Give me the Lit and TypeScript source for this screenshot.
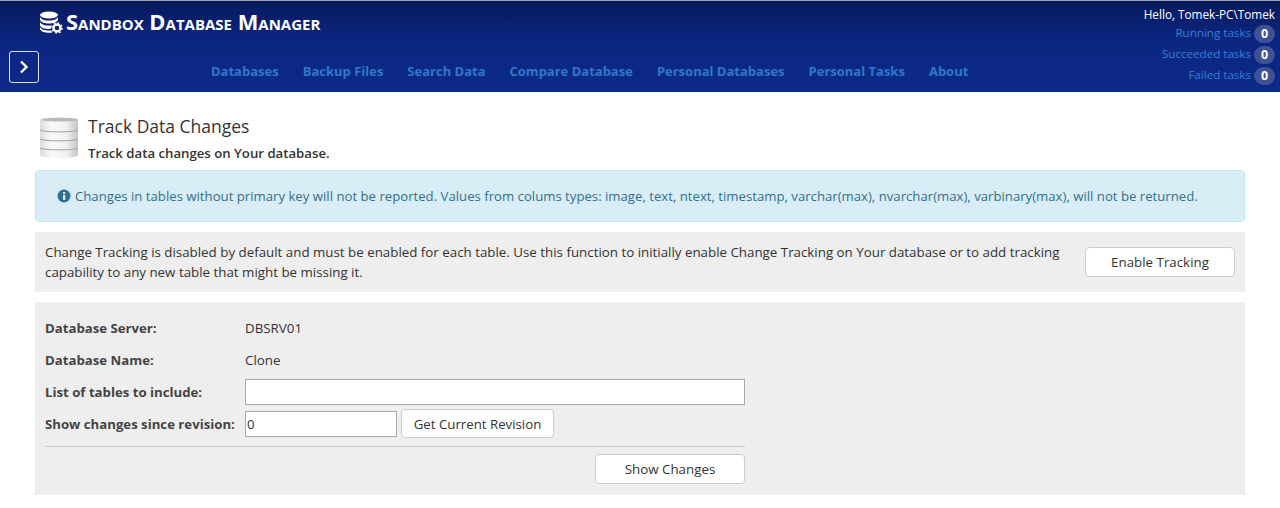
import { LitElement, html, css } from "lit";
import { customElement } from "lit/decorators.js";

const NAV = ["Databases", "Backup Files", "Search Data", "Compare Database", "Personal Databases", "Personal Tasks", "About"];
const TASKS = ["Running tasks", "Succeeded tasks", "Failed tasks"];

@customElement("app-root")
export class AppRoot extends LitElement {
  static styles = css`
    :host { display: block; font-family: "Open Sans", "Noto Sans", sans-serif; font-size: 13.33px; color: #333; background: #fff; height: 508px; overflow: hidden; }
    * { box-sizing: border-box; }
    header { height: 92px; border-top: 1px solid #9a9fb0; background: linear-gradient(#081a5c 0, #0c2682 40px, #0c2a88 100%); display: grid; grid-template-columns: 1fr auto; color: #fff; }
    .left { display: flex; flex-direction: column; }
    .brand { display: flex; align-items: center; height: 42px; padding: 0 0 0 39px; gap: 3px; }
    .brand span { font-weight: 700; font-variant: small-caps; font-size: 21.85px; line-height: 24px; }
    .lower { display: flex; align-items: flex-start; padding: 8px 0 0 9px; }
    .toggle { width: 30px; height: 32px; border: 1px solid #dfe3f0; border-radius: 3px; display: flex; align-items: center; justify-content: center; }
    nav { display: flex; gap: 24px; margin: 10px 0 0 172px; }
    nav a { font-weight: 700; font-size: 13px; line-height: 20px; color: #2f78cc; }
    .user { display: flex; flex-direction: column; align-items: flex-end; padding: 5px 5px 0 0; }
    .hello { font-size: 11.75px; line-height: 16px; color: #fff; }
    .task { display: flex; align-items: center; gap: 3px; height: 21px; font-size: 11.6px; color: #357fd6; }
    .badge { width: 21px; height: 18px; margin-top: 2px; border-radius: 9px; background: #3f5194; color: #fff; font-weight: 700; font-size: 12.5px; display: flex; align-items: center; justify-content: center; }
    main { padding: 0 35px; }
    .title { display: flex; height: 78px; padding: 25px 0 0 5px; gap: 10px; }
    .head { margin-top: -3px; }
    h1 { margin: 1px 0 0; font-size: 17.5px; font-weight: 500; line-height: 22px; }
    .sub { margin-top: 8px; font-size: 13.2px; font-weight: 600; line-height: 17px; }
    .alert { height: 52px; background: #d9edf7; border: 1px solid #bce8f1; border-radius: 4px; color: #31708f; display: flex; align-items: center; gap: 4px; padding-left: 21px; font-size: 13.18px; white-space: nowrap; }
    .panel { background: #eee; margin-top: 10px; }
    .enable { height: 60px; display: flex; align-items: center; justify-content: space-between; padding: 0 10px; }
    .enable p { margin: 0; width: 1025px; line-height: 20px; }
    button { font: inherit; color: #333; background: #fff; border: 1px solid #ccc; border-radius: 4px; padding: 0; }
    .enable button { width: 150px; height: 30px; }
    .form { height: 193px; padding: 10px; }
    .form-inner { width: 700px; display: flex; flex-direction: column; }
    .row { display: flex; align-items: center; height: 32px; }
    label { width: 200px; font-weight: 700; font-size: 13.2px; color: #444; white-space: nowrap; }
    input { font: inherit; height: 26px; border: 1px solid #a9a9a9; background: #fff; padding: 0 1px; color: #333; }
    .wide { width: 500px; }
    .rev { width: 152px; }
    .getrev { width: 153px; height: 29px; margin: 0 0 1px 4px; font-size: 13.25px; }
    .actions { margin-top: 6px; border-top: 1px solid #ccc; padding-top: 7px; display: flex; justify-content: flex-end; }
    .actions button { width: 150px; height: 30px; }
  `;

  render() {
    return html`
      <header>
        <div class="left">
          <div class="brand">
            <svg width="24" height="24" viewBox="0 0 24 24" fill="#fff">
              <ellipse cx="10" cy="5" rx="9" ry="3.5" />
              <path d="M1 7c1 2.5 5 3.6 9 3.6S18 9.500 19 7v3c-1 2.500-5 3.500-9 3.500S2 12.500 1 10z" />
              <path d="M1 12c1 2.500 5 3.600 9 3.600 1 0 2-.1 3-.3-1 1-1.300 2.200-1 3.500-.6.1-1.300.1-2 .1-4 0-8-1-9-3.500z" />
              <path d="M1 17c1 2.500 5 3.500 9 3.500.7 0 1.500 0 2.300-.1.2.8.5 1.400 1 2-1 .2-2.200.3-3.300.3-4 0-8-1-9-3.500z" />
              <circle cx="18" cy="18" r="3.500" fill="none" stroke="#fff" stroke-width="2.400" />
              <circle cx="18" cy="18" r="5" fill="none" stroke="#fff" stroke-width="1.500" stroke-dasharray="1.800 2.100" />
            </svg>
            <span>Sandbox Database Manager</span>
          </div>
          <div class="lower">
            <div class="toggle">
              <svg width="12" height="14" viewBox="0 0 12 14"><path d="M3 1.500 8.500 7 3 12.500" fill="none" stroke="#fff" stroke-width="2.400" /></svg>
            </div>
            <nav>${NAV.map((n) => html`<a>${n}</a>`)}</nav>
          </div>
        </div>
        <div class="user">
          <div class="hello">Hello, Tomek-PC\\Tomek</div>
          ${TASKS.map((t) => html`<div class="task">${t}<span class="badge">0</span></div>`)}
        </div>
      </header>
      <main>
        <div class="title">
          <svg width="38" height="41" viewBox="0 0 38 41">
            <defs>
              <linearGradient id="d" x1="0" x2="1" y1="0" y2="0">
                <stop offset="0" stop-color="#dcdcdc" /><stop offset=".3" stop-color="#fafafa" /><stop offset=".7" stop-color="#f0f0f0" /><stop offset="1" stop-color="#c4c4c4" />
              </linearGradient>
            </defs>
            <path d="M0 3C0 1 8 0 19 0s19 1 19 3v35c0 2-8 3-19 3S0 40 0 38z" fill="url(#d)" />
            <path d="M1 3c3-3 33-3 36 0-3 2-33 2-36 0z" fill="#b9b9b9" />
            <path d="M0 13c4 2.500 34 2.500 38 0M0 22c4 2.500 34 2.500 38 0M0 31c4 2.500 34 2.500 38 0" fill="none" stroke="#a0a0a0" />
          </svg>
          <div class="head">
            <h1>Track Data Changes</h1>
            <div class="sub">Track data changes on Your database.</div>
          </div>
        </div>
        <div class="alert">
          <svg width="14" height="14" viewBox="0 0 14 14"><circle cx="7" cy="7" r="6.500" fill="#31708f" /><rect x="6" y="6" width="2.200" height="5" fill="#d9edf7" /><rect x="6" y="3" width="2.200" height="2" fill="#d9edf7" /></svg>
          <span>Changes in tables without primary key will not be reported. Values from colums types: image, text, ntext, timestamp, varchar(max), nvarchar(max), varbinary(max), will not be returned.</span>
        </div>
        <section class="panel enable">
          <p>Change Tracking is disabled by default and must be enabled for each table. Use this function to initially enable Change Tracking on Your database or to add tracking capability to any new table that might be missing it.</p>
          <button>Enable Tracking</button>
        </section>
        <section class="panel form">
          <div class="form-inner">
            <div class="row"><label>Database Server:</label><span>DBSRV01</span></div>
            <div class="row"><label>Database Name:</label><span>Clone</span></div>
            <div class="row"><label>List of tables to include:</label><input class="wide" /></div>
            <div class="row"><label>Show changes since revision:</label><input class="rev" value="0" /><button class="getrev">Get Current Revision</button></div>
            <div class="actions"><button>Show Changes</button></div>
          </div>
        </section>
      </main>
    `;
  }
}
